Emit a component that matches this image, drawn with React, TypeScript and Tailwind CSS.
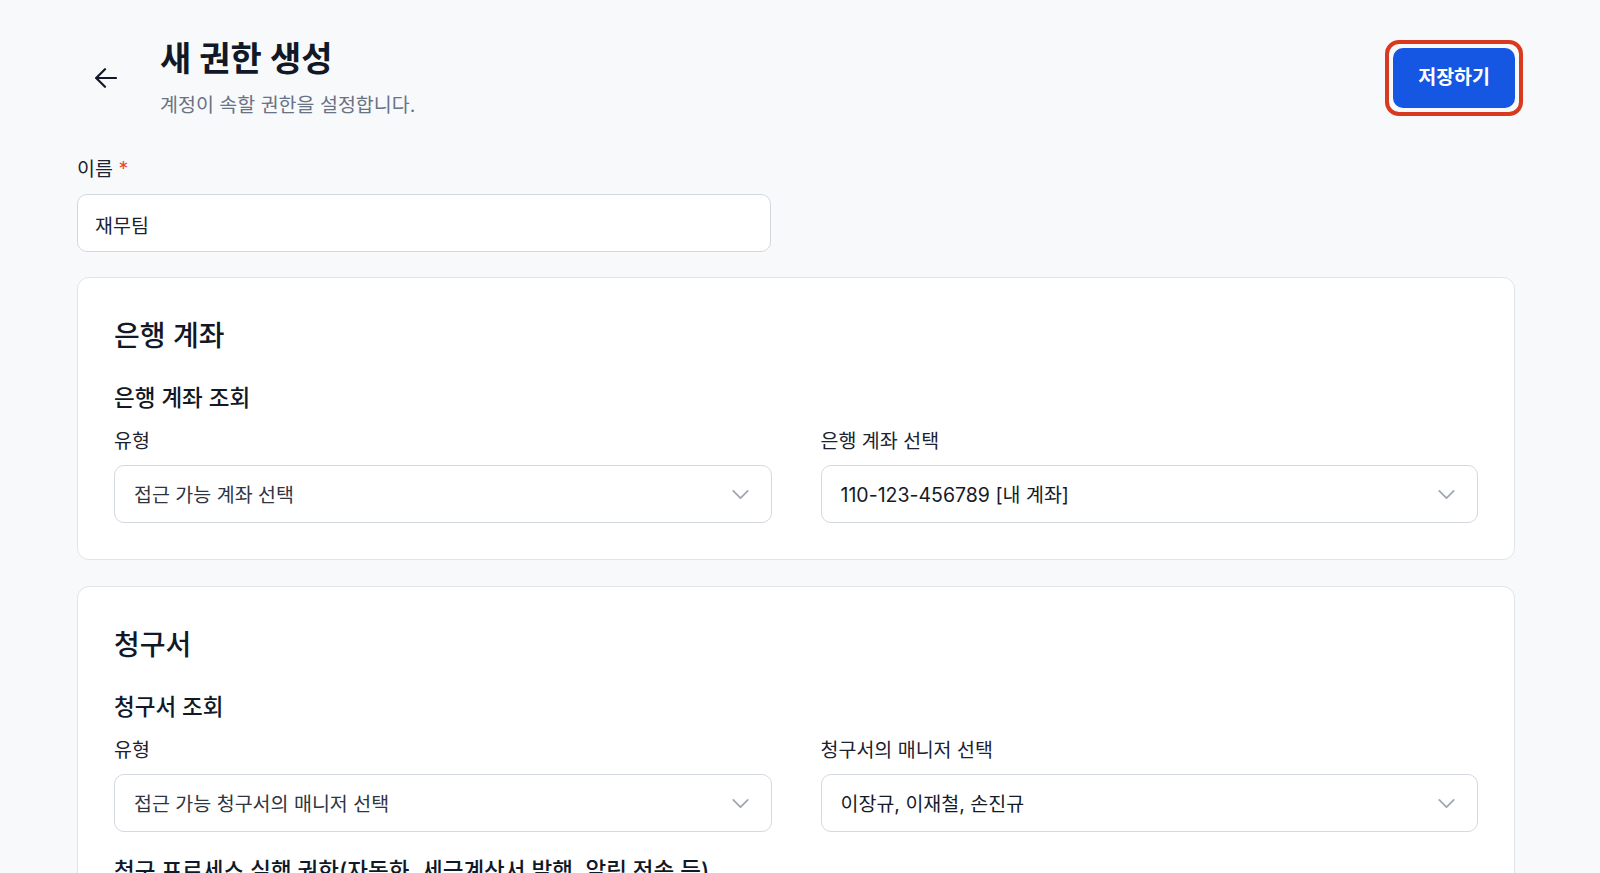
import React from 'react';
import { ChevronDown } from 'lucide-react';

const Select: React.FC<{ text: string; muted?: boolean }> = ({ text, muted }) => (
  <div className="mt-[10px] h-[58px] bg-white border border-[#d4d8df] rounded-[10px] flex items-center justify-between pl-[19px] pr-[16px]">
    <span className={muted ? 'pt-[4px] text-[19.5px] text-[#2f3542]' : 'pt-[4px] text-[19.5px] text-[#151b26]'}>{text}</span>
    <ChevronDown size={29} strokeWidth={1.5} className="text-[#a0a7b3]" />
  </div>
);

const Field: React.FC<{ label: string; text: string; muted?: boolean }> = ({ label, text, muted }) => (
  <div>
    <p className="pt-[2px] text-[19.5px] leading-[27px] text-[#1c2230]">{label}</p>
    <Select text={text} muted={muted} />
  </div>
);

const App: React.FC = () => {
  return (
    <div className="min-h-screen bg-[#f8f9fb] font-[Inter,'Noto_Sans_CJK_KR',sans-serif] text-[#111827]">
      <div className="pl-[77px] pr-[85px] pt-[36px] pb-16">
        {/* Header */}
        <div className="flex items-start justify-between">
          <div className="flex items-center">
            <button className="ml-[18px] mr-[43px] text-[#111827]">
              <svg width="22" height="20" viewBox="0 0 22 20" fill="none" stroke="currentColor" strokeWidth="2.2" strokeLinecap="round" strokeLinejoin="round">
                <path d="M21 10H1.5" />
                <path d="M10 1.2 1.2 10l8.8 8.8" />
              </svg>
            </button>
            <div>
              <h1 className="text-[34px] leading-[46px] font-bold text-[#111827]">새 권한 생성</h1>
              <p className="mt-[10px] text-[19.5px] leading-[27px] text-[#687385]">계정이 속할 권한을 설정합니다.</p>
            </div>
          </div>
          <div className="mt-[4px] mr-[-8px] rounded-[14px] border-[4px] border-[#d8391f] p-[4px]">
            <button className="h-[60px] px-[25px] rounded-[10px] bg-[#1557e2] text-white text-[19.5px] font-semibold">저장하기</button>
          </div>
        </div>

        {/* Name */}
        <div className="mt-[35px] w-[694px]">
          <p className="pt-[2px] text-[19.5px] leading-[27px] text-[#1c2230]">
            이름 <span className="text-[#e8472a]">*</span>
          </p>
          <input
            className="mt-[11px] w-full h-[58px] bg-white border border-[#d4d8df] rounded-[10px] px-[17px] pt-[3px] text-[19.5px] text-[#1c2230] outline-none"
            defaultValue="재무팀"
          />
        </div>

        {/* Bank account */}
        <div className="mt-[25px] bg-white border border-[#e1e4e9] rounded-xl p-9">
          <h2 className="pt-[3px] text-[28px] leading-[39px] font-medium text-[#111827]">은행 계좌</h2>
          <h3 className="mt-[27px] text-[22.5px] leading-[30px] font-medium text-[#111827]">은행 계좌 조회</h3>
          <div className="mt-[13px] grid grid-cols-2 gap-x-[49px]">
            <Field label="유형" text="접근 가능 계좌 선택" muted />
            <Field label="은행 계좌 선택" text="110-123-456789 [내 계좌]" />
          </div>
        </div>

        {/* Invoices */}
        <div className="mt-[26px] bg-white border border-[#e1e4e9] rounded-xl p-9">
          <h2 className="pt-[3px] text-[28px] leading-[39px] font-medium text-[#111827]">청구서</h2>
          <h3 className="mt-[27px] text-[22.5px] leading-[30px] font-medium text-[#111827]">청구서 조회</h3>
          <div className="mt-[13px] grid grid-cols-2 gap-x-[49px]">
            <Field label="유형" text="접근 가능 청구서의 매니저 선택" muted />
            <Field label="청구서의 매니저 선택" text="이장규, 이재철, 손진규" />
          </div>
          <h3 className="mt-[24px] text-[22.5px] leading-[30px] font-medium text-[#111827]">
            청구 프로세스 실행 권한(자동화, 세금계산서 발행, 알림 전송 등)
          </h3>
          <div className="mt-[13px] grid grid-cols-2 gap-x-[49px]">
            <Field label="유형" text="접근 가능 청구서의 매니저 선택" muted />
            <Field label="청구서의 매니저 선택" text="이장규, 이재철, 손진규" />
          </div>
        </div>
      </div>
    </div>
  );
};

export default App;
